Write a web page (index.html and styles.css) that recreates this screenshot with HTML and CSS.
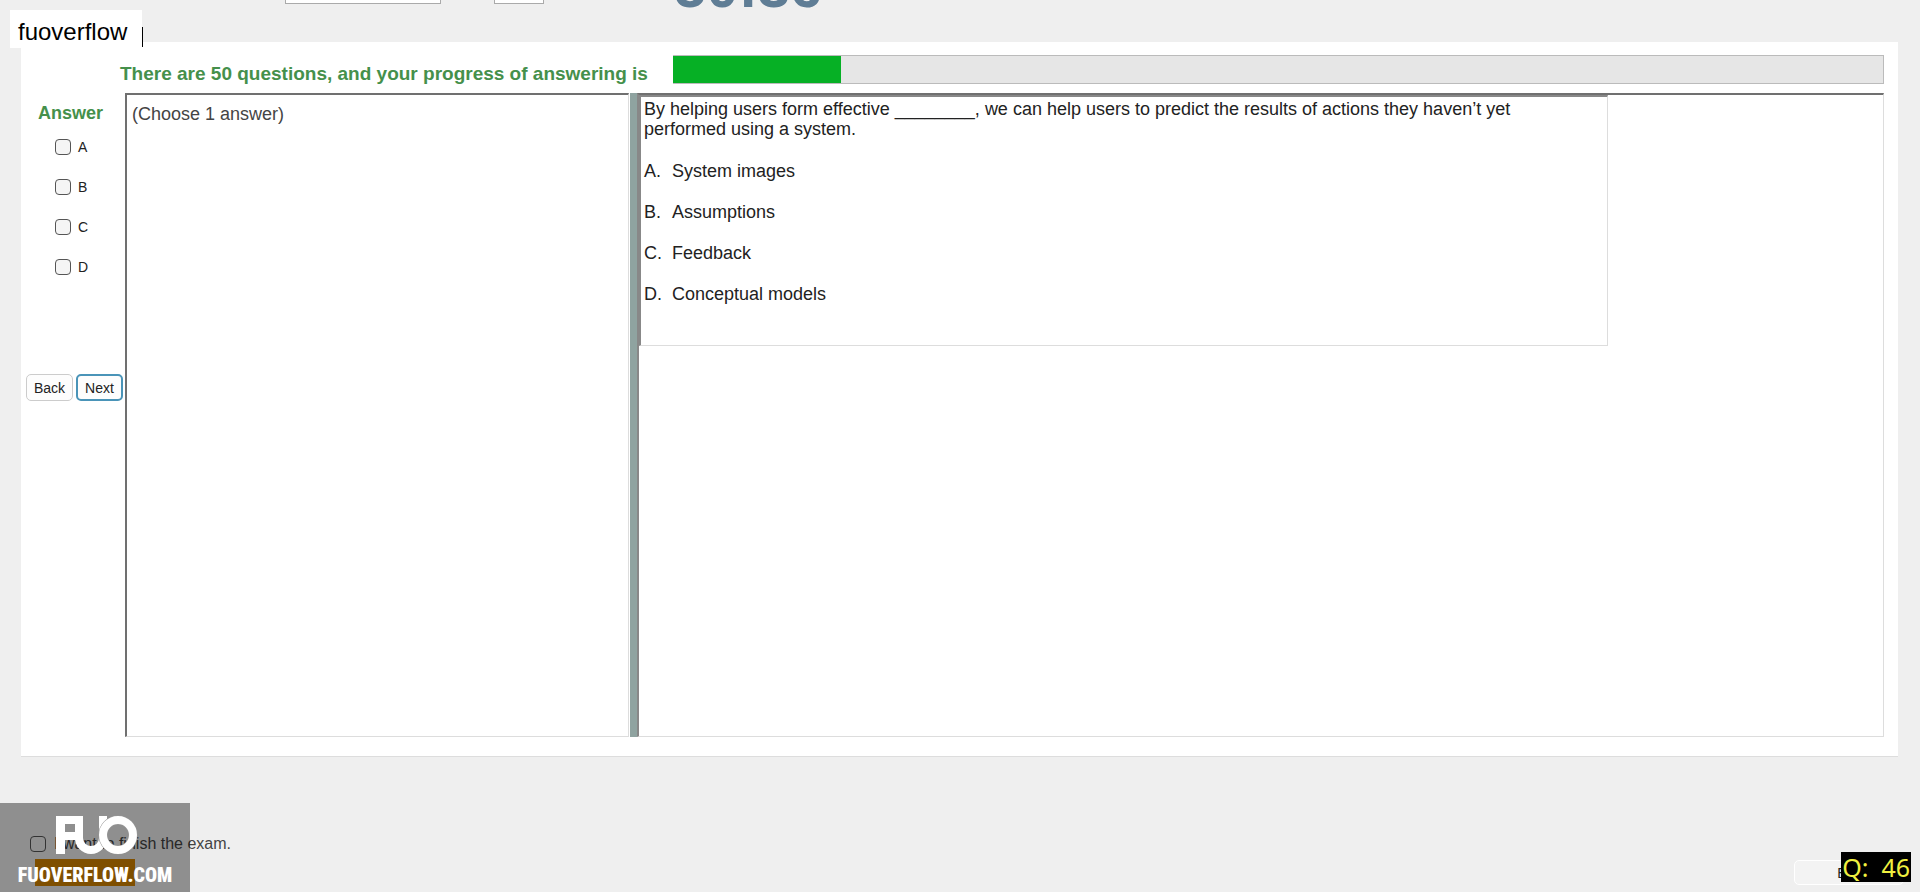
FILE: index.html
```html
<!DOCTYPE html>
<html lang="en">

	<head>
		<meta charset="UTF-8">
		<title>Exam</title>
		<link rel="stylesheet" href="styles.css">
	</head>
	<body>
		<div class="tag">fuoverflow<i class="caret"></i></div>
		<header class="top">
			<select class="font-name" aria-label="Font"><option></option></select>
			<input class="font-size" type="text" aria-label="Size">
			<div class="timer">50:36</div>
		</header>
		<main class="wrap">
			<div class="status">
				<h1>There are 50 questions, and your progress of answering is</h1>
				<div class="bar"><div class="done" style="width: 13.9%"></div></div>
			</div>
			<div class="exam">
				<div class="side">
					<h2>Answer</h2>
					<ul class="choices">
						<li><label><input type="checkbox">A</label></li>
						<li><label><input type="checkbox">B</label></li>
						<li><label><input type="checkbox">C</label></li>
						<li><label><input type="checkbox">D</label></li>
					</ul>
					<div class="btns">
						<button>Back</button>
						<button class="activ">Next</button>
					</div>
				</div>
				<div class="note">(Choose 1 answer)</div>
				<div class="split"></div>
				<div class="con">
					<div class="question">
						<p>By helping users form effective ________, we can help users to predict the results of actions they haven’t yet performed using a system.</p>
						<dl>
							<dt>A.</dt><dd>System images</dd>
							<dt>B.</dt><dd>Assumptions</dd>
							<dt>C.</dt><dd>Feedback</dd>
							<dt>D.</dt><dd>Conceptual models</dd>
						</dl>
					</div>
				</div>
			</div>
		</main>
		<footer class="foot">
			<label class="finish"><input type="checkbox">I want to finish the exam.</label>
			<button class="exit">Exit</button>
		</footer>
		<div class="logo">
			<svg class="mark" width="84" height="40" viewBox="0 0 84 40">
				<defs>
					<clipPath id="low"><rect x="20" y="1" width="36" height="39" /></clipPath>
				</defs>
				<g fill="#fff">
					<rect x="1" y="1" width="9" height="38" />
					<rect x="1" y="1" width="22" height="8" />
					<rect x="1" y="17" width="22" height="8" />
				</g>
				<rect x="24" y="-20" width="24" height="55" rx="12" fill="none" stroke="#fff" stroke-width="8" clip-path="url(#low)" />
				<circle cx="63" cy="20" r="15" fill="none" stroke="#999" stroke-width="9" />
				<circle cx="63" cy="20" r="15" fill="none" stroke="#fff" stroke-width="8" />
			</svg>
			<div class="site">FUOVERFLOW.COM</div>
		</div>
		<div class="count">Q:&nbsp; 46</div>
	</body>
</html>
```
FILE: styles.css
```css
* {
	box-sizing: border-box;
}

body {
	margin: 0;
	min-height: 100vh;
	display: flex;
	flex-direction: column;
	overflow: hidden;
	background: #efefef;
	color: #222;
	font: 18px/20px "Liberation Sans", Arial, sans-serif;
}

h1,
h2,
p,
ul,
dl,
dd {
	margin: 0;
	padding: 0;
	list-style: none;
}

/* header is scrolled almost out of view */
.top {
	height: 72px;
	margin-top: -30px;
	padding-left: 285px;
	display: flex;
	align-items: flex-start;
}

.font-name,
.font-size {
	height: 34px;
	border: 1px solid #aaa;
	background: #fff;
}

.font-name {
	width: 156px;
}

.font-size {
	width: 50px;
	margin-left: 53px;
}

.timer {
	margin-left: 130px;
	color: #5f7d95;
	font: bold 58px/34px "Liberation Sans", Arial, sans-serif;
}

.wrap {
	flex: 1;
	margin: 0 22px 0 21px;
	padding: 13px 14px 19px 5px;
	display: flex;
	flex-direction: column;
	background: #fff;
	border-bottom: 1px solid #ddd;
}

.status {
	display: flex;
	gap: 25px;
	padding-left: 94px;
	margin-bottom: 9px;
}

h1,
h2 {
	color: #45904b;
	font-size: 19px;
	font-weight: bold;
}

h1 {
	padding-top: 9px;
	white-space: nowrap;
}

.bar {
	flex: 1;
	height: 29px;
	border: 1px solid #bbb;
	border-left: 0;
	background: #e6e6e6;
}

.done {
	height: 100%;
	background: #06b025;
}

.exam {
	flex: 1;
	display: flex;
}

.side {
	width: 99px;
}

h2 {
	padding: 10px 0 0 12px;
	font-size: 18px;
}

.choices {
	padding: 14px 0 0 29px;
	font-size: 14px;
}

.choices li {
	height: 40px;
}

label {
	display: inline-flex;
	align-items: center;
	gap: 7px;
}

input[type=checkbox] {
	appearance: none;
	width: 16px;
	height: 16px;
	margin: 0;
	border: 1px solid #555;
	border-radius: 4px;
	background: #f5f5f5;
}

.finish input[type=checkbox] {
	background: none;
}

.btns {
	display: flex;
	gap: 3px;
	padding-top: 77px;
}

button {
	padding: 0;
	border: 1px solid #ccc;
	border-radius: 5px;
	background: #fdfdfd;
	color: #222;
	font: 14px/20px "Liberation Sans", Arial, sans-serif;
}

.btns button {
	width: 47px;
	height: 27px;
}

.btns .activ {
	border: 2px solid #4a94b8;
}

.note {
	width: 504px;
	padding: 9px 5px;
	border: 1px solid #ddd;
	border-top: 2px solid #707070;
	border-left: 2px solid #707070;
	color: #444;
}

.split {
	width: 7px;
	margin-left: 1px;
	background: #8fa3a0;
}

.con {
	flex: 1;
	border: 1px solid #ddd;
	border-top: 2px solid #707070;
	border-left: 2px solid #888;
}

.question {
	max-width: 969px;
	min-height: 251px;
	padding: 2px 60px 0 3px;
	border: 1px solid #ddd;
	border-top: 2px solid #888;
	border-left: 2px solid #888;
}

dl {
	display: grid;
	grid-template-columns: 28px 1fr;
	row-gap: 21px;
	padding-top: 22px;
}

.foot {
	height: 135px;
	padding: 75px 0 0 30px;
	display: flex;
	justify-content: space-between;
}

.finish {
	align-self: flex-start;
	gap: 8px;
	padding-top: 2px;
	font-size: 16px;
	color: #444;
}

.exit {
	width: 110px;
	height: 25px;
	margin: 28px 16px 0 0;
	border-color: #fff;
	background: #f3f3f3;
}

/* things floating over the page */
.tag,
.logo,
.count {
	position: absolute;
}

.tag {
	left: 10px;
	top: 10px;
	padding: 9px 15px 3px 8px;
	background: #fff;
	color: #000;
	font: 24px/26px "Liberation Sans", Arial, sans-serif;
}

.caret {
	position: absolute;
	right: -1px;
	bottom: 1px;
	width: 1px;
	height: 20px;
	background: #000;
}

.logo {
	left: 0;
	bottom: 0;
	width: 190px;
	height: 89px;
	padding-top: 12px;
	background: rgba(0, 0, 0, .4);
}

.mark {
	display: block;
	margin-left: 55px;
}

.site {
	margin-top: 4px;
	text-align: center;
	background: linear-gradient(#7f4f00, #7f4f00) 35px 0/100px 27px no-repeat;
	color: #fff;
	font: 900 20px/32px "Roboto Condensed", "Open Sans Condensed", "DejaVu Sans Condensed", sans-serif;
}

.count {
	right: 9px;
	bottom: 10px;
	padding: 0 1px;
	background: #000;
	color: #f0f040;
	font: 25px/30px "Noto Sans", sans-serif;
}
```
